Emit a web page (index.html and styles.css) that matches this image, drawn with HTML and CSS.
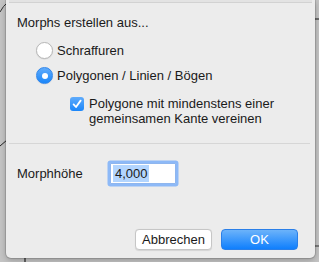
FILE: index.html
```html
<!DOCTYPE html>
<html lang="de">
<head>
<meta charset="utf-8">
<link rel="stylesheet" href="styles.css">
</head>
<body>
<svg class="backdrop" width="319" height="262" viewBox="0 0 319 262">
  <path d="M0 12 Q3 6 8 2" fill="none" stroke="#333" stroke-width="1"/>
  <path d="M0 146 L7 140" fill="none" stroke="#222" stroke-width="1"/>
  <path d="M312 19 L319 19" fill="none" stroke="#333" stroke-width="1.2"/>
  <path d="M312 246 L319 246" fill="none" stroke="#333" stroke-width="1"/>
  <path d="M25 256 L25 262" fill="none" stroke="#222" stroke-width="1.2"/>
</svg>
<div class="dialog">
  <div class="topline"></div>
  <div class="title">Morphs erstellen aus...</div>
  <div class="radio-row first">
    <span class="radio"></span>
    <span class="label">Schraffuren</span>
  </div>
  <div class="radio-row second">
    <span class="radio on"><span class="dot"></span></span>
    <span class="label">Polygonen / Linien / Bögen</span>
  </div>
  <div class="check-row">
    <span class="checkbox">
      <svg width="14" height="14" viewBox="0 0 14 14"><path d="M3.6 7.4 L6 10 L10.6 3.6" fill="none" stroke="#fff" stroke-width="1.8" stroke-linecap="round" stroke-linejoin="round"/></svg>
    </span>
    <span class="check-label">Polygone mit mindenstens einer<br>gemeinsamen Kante vereinen</span>
  </div>
  <div class="separator"></div>
  <div class="field-row">
    <span class="field-label">Morphhöhe</span>
    <span class="input"><span class="sel">4,000</span></span>
  </div>
  <div class="buttons">
    <span class="btn cancel">Abbrechen</span>
    <span class="btn ok">OK</span>
  </div>
</div>
</body>
</html>
```
FILE: styles.css
```css
html, body {
  margin: 0;
  padding: 0;
}
body {
  width: 319px;
  height: 262px;
  background: #c4c4c4;
  font-family: "Liberation Sans", Arial, sans-serif;
  font-size: 13px;
  color: #1a1a1a;
  overflow: hidden;
  position: relative;
}
.backdrop {
  position: absolute;
  left: 0;
  top: 0;
}
.dialog {
  position: relative;
  margin-left: 6px;
  width: 309px;
  height: 258px;
  background: #ececec;
  border-radius: 0 0 5px 5px;
  box-shadow: 0 0 0 1px rgba(0,0,0,0.12), 0 2px 6px rgba(0,0,0,0.25);
  display: flex;
  flex-direction: column;
  box-sizing: border-box;
}
.topline {
  height: 2px;
  background: #e3e3e3;
  border-bottom: 1px solid #d2d2d2;
  margin: 0 3px;
}
.title {
  margin-top: 12px;
  margin-left: 11px;
  line-height: 16px;
  height: 16px;
}
.radio-row {
  display: flex;
  align-items: center;
  height: 17px;
  margin-left: 30px;
}
.radio-row.first { margin-top: 11px; }
.radio-row.second { margin-top: 8px; }
.radio {
  width: 15px;
  height: 15px;
  border-radius: 50%;
  background: #fff;
  border: 1px solid #b8b8b8;
  box-shadow: 0 0.5px 1px rgba(0,0,0,0.12);
  display: flex;
  align-items: center;
  justify-content: center;
}
.radio.on {
  background: linear-gradient(#5fabfb, #1a86fa);
  border-color: #2f86ec;
}
.dot {
  width: 6px;
  height: 6px;
  border-radius: 50%;
  background: #fff;
}
.label {
  margin-left: 4px;
  line-height: 16px;
}
.check-row {
  display: flex;
  align-items: flex-start;
  margin-left: 64px;
  margin-top: 12px;
}
.checkbox {
  width: 14px;
  height: 14px;
  margin-top: 1px;
  border-radius: 3px;
  background: linear-gradient(#5fabfb, #1a86fa);
  display: block;
}
.checkbox svg { display: block; }
.check-label {
  margin-left: 5px;
  line-height: 15px;
}
.separator {
  margin: 17px 5px 0 3px;
  height: 1px;
  background: #d6d6d6;
}
.field-row {
  display: flex;
  align-items: center;
  margin-top: 19px;
  margin-left: 11px;
}
.field-label {
  width: 93px;
  line-height: 16px;
}
.input {
  width: 62px;
  height: 19px;
  background: #fff;
  border: 1px solid #8fb6ee;
  box-shadow: 0 0 0 2.5px #8db9f7;
  border-radius: 1px;
  display: flex;
  align-items: center;
  padding-left: 2px;
  box-sizing: content-box;
}
.sel {
  background: #b3d5fe;
  padding: 1px 1px 1px 2px;
  line-height: 15px;
}
.buttons {
  margin-top: auto;
  margin-bottom: 8px;
  display: flex;
  justify-content: flex-end;
  gap: 9px;
  padding-right: 17px;
}
.btn {
  width: 77px;
  height: 21px;
  box-sizing: border-box;
  border-radius: 4px;
  display: flex;
  align-items: center;
  justify-content: center;
  line-height: 16px;
}
.cancel {
  background: #fff;
  border: 1px solid #c6c6c6;
  box-shadow: 0 0.5px 1px rgba(0,0,0,0.1);
}
.ok {
  background: linear-gradient(#6cb3fa, #0f7ffd);
  border: 1px solid #2a7fe8;
  color: #fff;
}
```
